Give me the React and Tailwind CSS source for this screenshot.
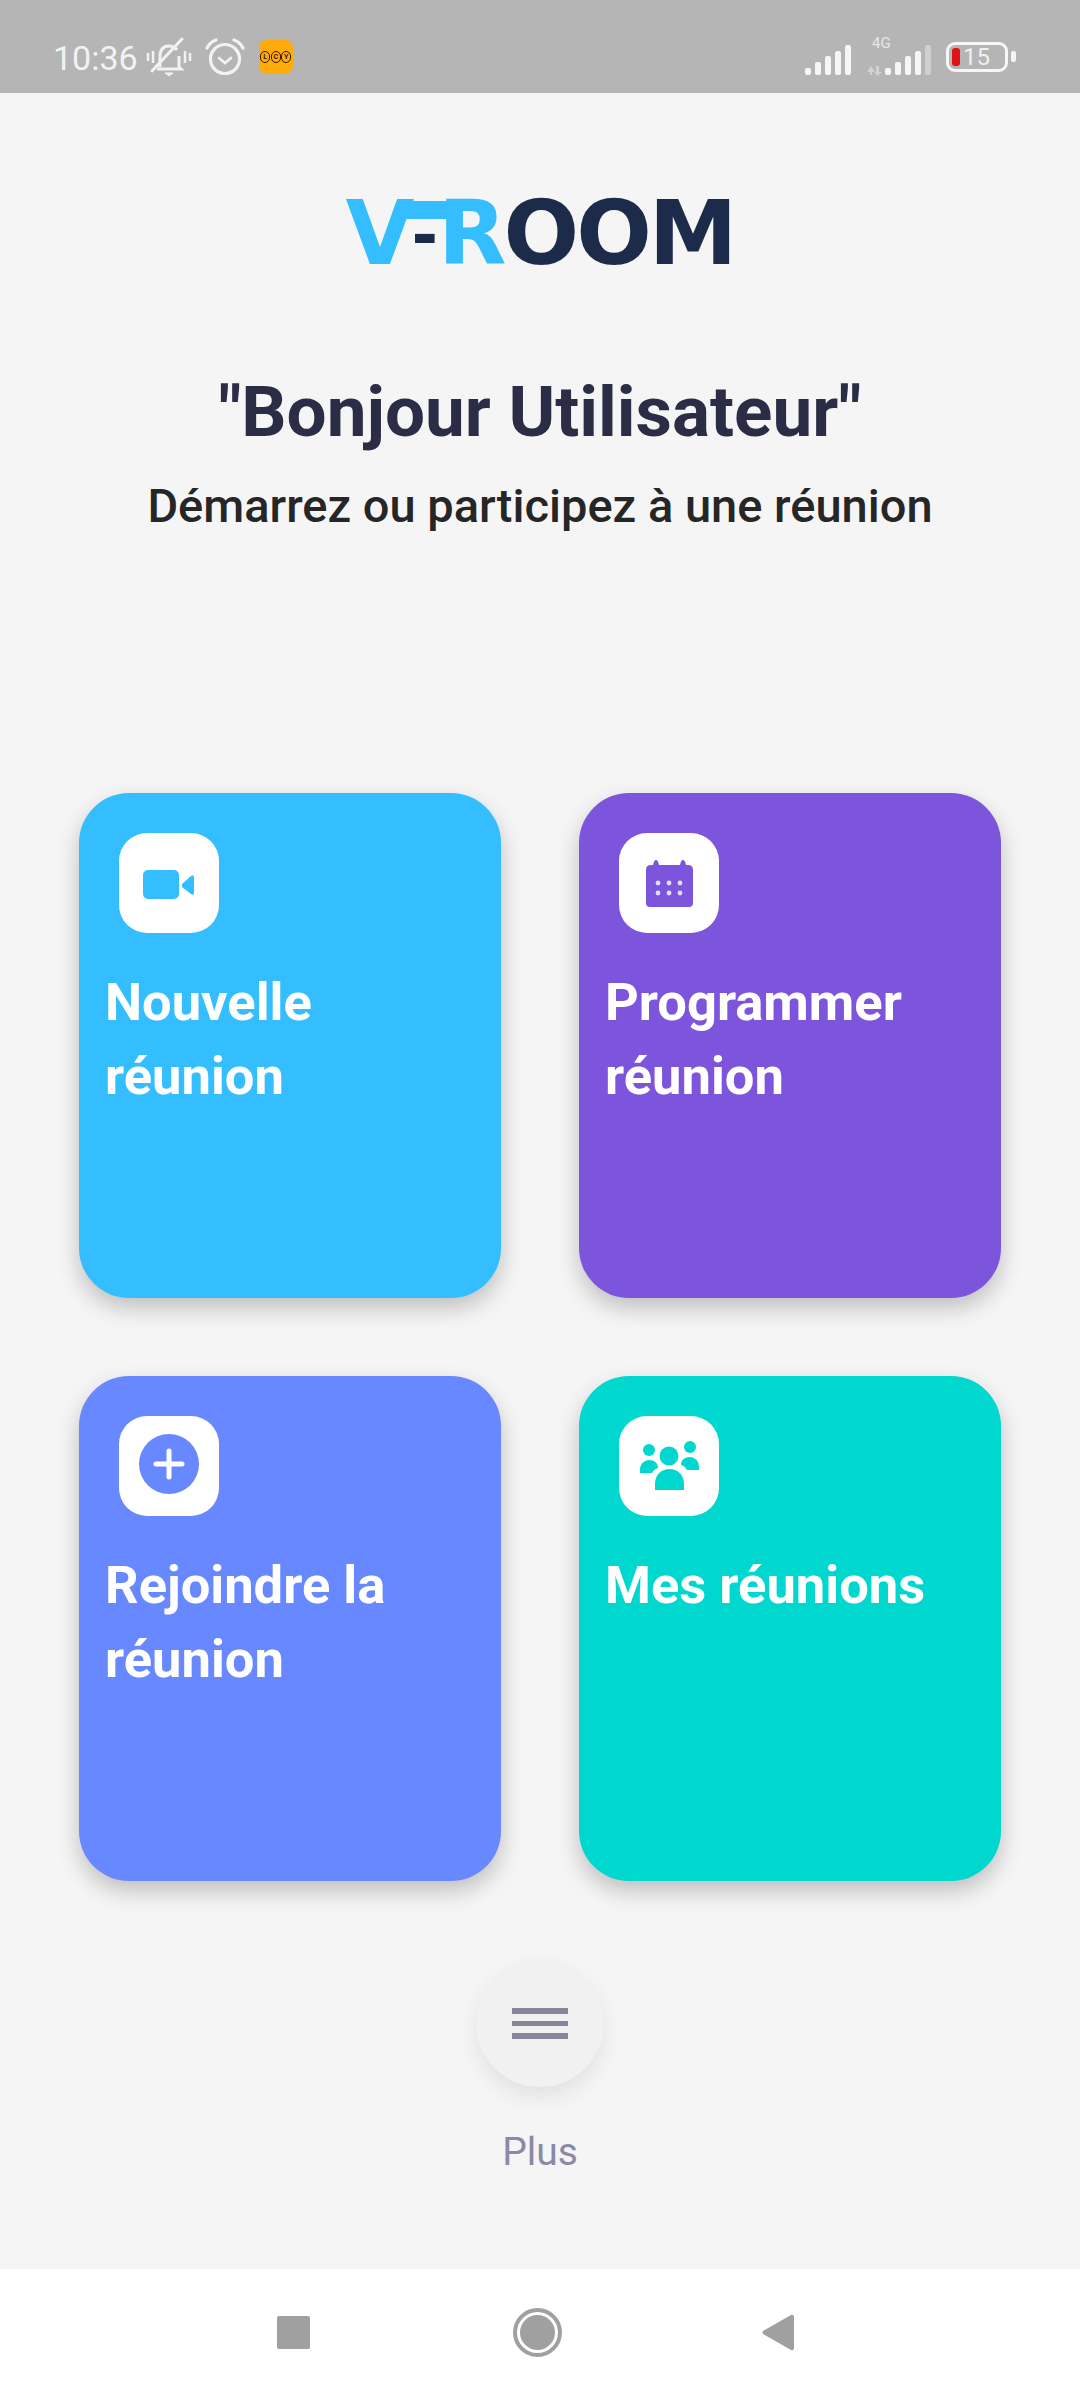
const roboto = { fontFamily: 'Roboto, sans-serif' };

function VideoIcon({ color }) {
  return (
    <svg viewBox="0 0 100 100" className="w-[100px] h-[100px]" fill={color}>
      <rect x="24" y="37" width="36" height="29" rx="5" />
      <path d="M63 51 L72 43 Q75 41 75 45 V60 Q75 63 72 61 L63 54 Z" />
    </svg>
  );
}

function CalendarIcon({ color }) {
  const dots = [39, 50, 61];
  return (
    <svg viewBox="0 0 100 100" className="w-[100px] h-[100px]" fill={color}>
      <path d="M32 32 H34 Q35 27 37 27 Q39 27 40 32 H61 Q62 27 64 27 Q66 27 67 32 H69 Q74 32 74 37 V70 Q74 74 70 74 H31 Q27 74 27 70 V37 Q27 32 32 32 Z" />
      {dots.map((x) => (
        <g key={x} fill="#e6def8">
          <circle cx={x} cy="50" r="2.4" />
          <circle cx={x} cy="60" r="2.4" />
        </g>
      ))}
    </svg>
  );
}

function PlusIcon({ color }) {
  return (
    <svg viewBox="0 0 100 100" className="w-[100px] h-[100px]">
      <circle cx="50" cy="48" r="30" fill={color} />
      <path d="M37 48 H63 M50 35 V61" stroke="#fff" strokeWidth="5" strokeLinecap="round" />
    </svg>
  );
}

function GroupIcon({ color }) {
  return (
    <svg viewBox="0 0 100 100" className="w-[100px] h-[100px]" fill={color}>
      <circle cx="50" cy="40" r="9.5" />
      <path d="M36 74 V68 C36 48 65 48 65 68 V74 Z" />
      <circle cx="30" cy="34" r="6" />
      <path d="M21 57 V54 C21 41 39 41 39 52 Q35 53 33 57 Z" />
      <circle cx="71" cy="31" r="6" />
      <path d="M80 54 V51 C80 38 62 38 62 49 Q66 50 68 54 Z" />
    </svg>
  );
}

const cards = [
  { title: ['Nouvelle', 'réunion'], bg: 'bg-[#35beff]', color: '#35beff', Icon: VideoIcon },
  { title: ['Programmer', 'réunion'], bg: 'bg-[#7c55dc]', color: '#7c55dc', Icon: CalendarIcon },
  { title: ['Rejoindre la', 'réunion'], bg: 'bg-[#6888ff]', color: '#6888ff', Icon: PlusIcon },
  { title: ['Mes réunions'], bg: 'bg-[#00d7ce]', color: '#00d7ce', Icon: GroupIcon },
];

function StatusBar() {
  const bars = [7, 13, 19, 24, 30];
  return (
    <div className="h-[93px] bg-[#b5b5b5] flex items-center justify-between pt-[20px] pl-[53px] pr-[72px] text-[#f2f2f2]" style={roboto}>
      <div className="flex items-center">
        <span className="text-[34px] leading-none mt-[2px]">10:36</span>
        <svg viewBox="0 0 46 42" className="w-[46px] h-[42px] ml-[8px] mt-[2px]" fill="none" stroke="#f2f2f2" strokeWidth="3">
          <path d="M14 30 V20 Q14 9 23 9 Q28 9 31 13 M33 19 V30 L35 32 H11" />
          <path d="M19 36 H27 L23 39 Z" fill="#f2f2f2" strokeWidth="1" />
          <path d="M6 34 L36 2" strokeLinecap="round" />
          <path d="M2 16 V24 M7 14 V26 M39 14 V26 M44 16 V24" strokeWidth="2.5" />
        </svg>
        <svg viewBox="0 0 40 38" className="w-[40px] h-[38px] ml-[13px]" fill="none" stroke="#f2f2f2" strokeWidth="3.2">
          <circle cx="20" cy="21" r="14.5" />
          <path d="M14 20 L20 25 L26 20" strokeLinecap="round" strokeWidth="2.6" />
          <path d="M2 10 Q5 4 11 2 M38 10 Q35 4 29 2" strokeLinecap="round" />
        </svg>
        <div className="w-[34px] h-[34px] ml-[14px] rounded-[8px] bg-[#ffab09] flex items-center justify-center gap-[0.5px]">
          {['L', 'C', 'Y'].map((l) => (
            <span
              key={l}
              className="w-[10px] h-[12px] rounded-full border border-[#3a1500] text-[7px] leading-[10px] text-center font-bold text-[#3a1500]"
            >
              {l}
            </span>
          ))}
        </div>
      </div>
      <div className="flex items-center">
        <svg viewBox="0 0 50 32" className="w-[50px] h-[32px] mt-[6px]" fill="#f6f6f6">
          {bars.map((h, i) => (
            <rect key={i} x={2 + i * 10} y={31 - h} width="6" height={h} rx="2" />
          ))}
        </svg>
        <div className="relative w-[70px] h-[36px] ml-[13px] mt-[2px]">
          <span className="absolute left-[6px] top-[-4px] text-[15px] leading-none text-[#e6e6e6]">4G</span>
          <svg viewBox="0 0 70 36" className="w-[70px] h-[36px]">
            <path d="M1 32 L5 26 L9 32 H6 V35 H4 V32 Z M10 26 H13 V32 H16 L11.5 36 L8 32 H10 Z" fill="#d2d2d2" />
            {bars.map((h, i) => (
              <rect key={i} x={19 + i * 10} y={35 - h} width="6" height={h} rx="2" fill={i === 4 ? '#cfcfcf' : '#f6f6f6'} />
            ))}
          </svg>
        </div>
        <div className="relative w-[62px] h-[30px] ml-[10px] rounded-[9px] border-[3.5px] border-[#f6f6f6] flex items-center">
          <div className="w-[8px] h-[18px] ml-[3px] rounded-[3px] bg-[#e01212]" />
          <span className="ml-[3px] text-[24px] leading-none text-[#efefef]">15</span>
          <div className="absolute right-[-11px] top-[6px] w-[5px] h-[11px] rounded-[2px] bg-[#f6f6f6]" />
        </div>
      </div>
    </div>
  );
}

function Logo() {
  return (
    <div
      className="flex items-center justify-center h-[68px] text-[89px] leading-none font-bold tracking-[-3px] text-[#1d2b4a]"
      style={{ fontFamily: '"DejaVu Sans", sans-serif' }}
    >
      <span className="text-[#35beff]">V</span>
      <span className="text-[64px] mt-[4px] tracking-normal">-</span>
      <span className="relative text-[#35beff]">
        R
        {/* band that ties the V to the top of the R */}
        <span className="absolute left-[-36px] top-[12px] w-[46px] h-[18px] bg-[#35beff]" />
      </span>
      <span>OOM</span>
    </div>
  );
}

function Card({ title, bg, color, Icon }) {
  return (
    <div className={`${bg} h-[505px] rounded-[50px] shadow-[0_10px_22px_rgba(0,0,0,0.22)] pt-[40px] pl-[26px]`}>
      <div className="ml-[14px] w-[100px] h-[100px] rounded-[28px] bg-white">
        <Icon color={color} />
      </div>
      <div className="mt-[32px] text-[52.5px] leading-[74px] font-bold text-white">
        {title.map((line) => (
          <div key={line}>{line}</div>
        ))}
      </div>
    </div>
  );
}

export default function App() {
  return (
    <div className="w-[1080px] h-[2400px] flex flex-col bg-[#f5f5f5] overflow-hidden" style={roboto}>
      <StatusBar />
      <main className="flex-1 flex flex-col items-stretch">
        <div className="mt-[106px]">
          <Logo />
        </div>
        <h1 className="mt-[103px] text-center text-[71px] leading-[84px] font-bold text-[#2a2d45]">"Bonjour Utilisateur"</h1>
        <p className="mt-[24px] text-center text-[47px] leading-[56px] font-medium text-[#262626]">
          Démarrez ou participez à une réunion
        </p>
        <div className="mt-[259px] px-[79px] grid grid-cols-2 gap-x-[78px] gap-y-[78px]">
          {cards.map((c) => (
            <Card key={c.title[0]} {...c} />
          ))}
        </div>
        <div className="mt-[78px] flex flex-col items-center">
          <div className="w-[128px] h-[128px] rounded-full bg-[#f1f1f1] shadow-[0_10px_20px_rgba(0,0,0,0.08)] flex flex-col items-center justify-center gap-[7px]">
            <div className="w-[56px] h-[6px] bg-[#868699]" />
            <div className="w-[56px] h-[5px] bg-[#868699]" />
            <div className="w-[56px] h-[6px] bg-[#868699]" />
          </div>
          <span className="mt-[41px] text-[39px] leading-[48px] text-[#8a8aa8]">Plus</span>
        </div>
      </main>
      <nav className="h-[131px] bg-white flex items-center pb-[5px] pl-[277px]">
        <div className="w-[33px] h-[33px] rounded-[2px] bg-[#a0a0a0]" />
        <div className="w-[49px] h-[49px] ml-[203px] rounded-full border-[4px] border-[#a0a0a0] p-[3px]">
          <div className="w-full h-full rounded-full bg-[#a0a0a0]" />
        </div>
        <svg viewBox="0 0 32 37" className="w-[32px] h-[37px] ml-[200px]" fill="#a0a0a0">
          <path d="M29 1 Q32 0 32 3 V34 Q32 37 29 36 L1 20 Q0 18.5 1 17 Z" />
        </svg>
      </nav>
    </div>
  );
}
